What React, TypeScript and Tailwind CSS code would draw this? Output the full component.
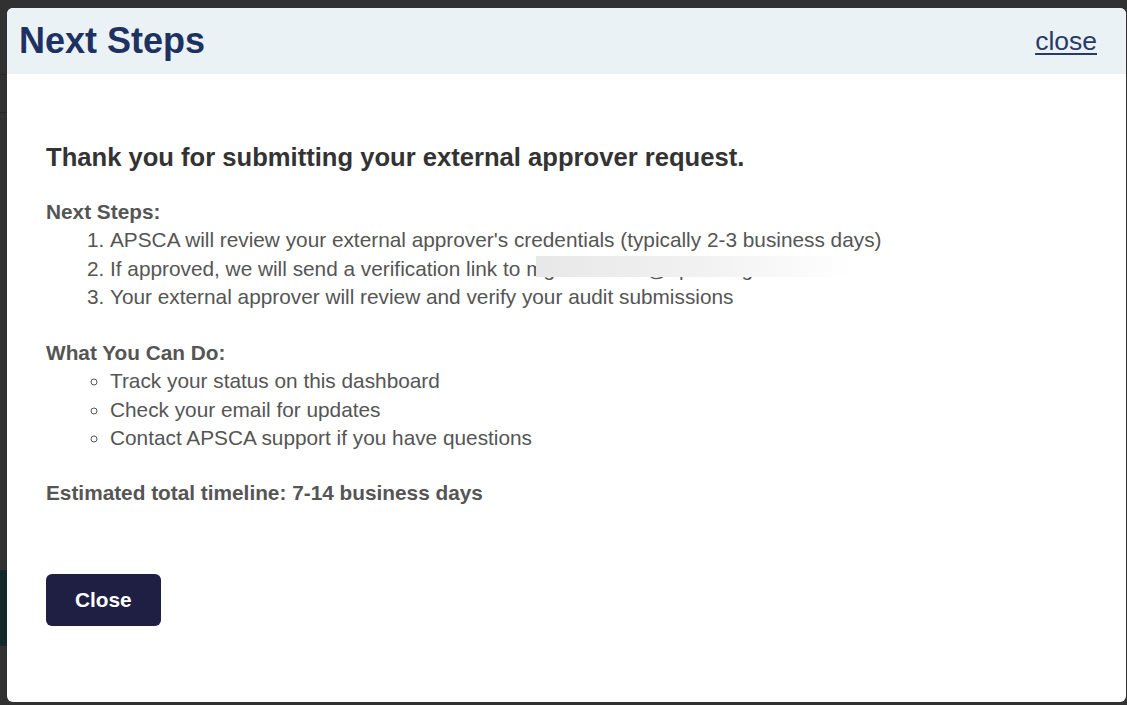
import React from "react";

const steps = [
  "APSCA will review your external approver's credentials (typically 2-3 business days)",
  "If approved, we will send a verification link to",
  "Your external approver will review and verify your audit submissions",
];

const todo = [
  "Track your status on this dashboard",
  "Check your email for updates",
  "Contact APSCA support if you have questions",
];

export default function App() {
  return (
    <div className="relative h-[705px] w-[1127px] overflow-hidden bg-[#313131] font-['Liberation_Sans',Arial,sans-serif]">
      {/* page underneath the overlay */}
      <div className="absolute left-0 top-[74px] h-px w-[7px] bg-[#262626]" />
      <div className="absolute left-0 top-[112px] h-px w-[7px] bg-[#262626]" />
      <div className="absolute left-0 top-[570px] h-[76px] w-[7px] bg-[#15292b]" />

      {/* Modal */}
      <div className="absolute left-[7px] top-[8px] flex h-[694px] w-[1119px] flex-col overflow-hidden rounded-[6px] bg-white">
        <div className="flex h-[66px] items-center justify-between bg-[#ebf2f5] pl-[12px] pr-[29px]">
          <h2 className="text-[36px] font-bold leading-[40px] text-[#1e3262]">Next Steps</h2>
          <a href="#" className="text-[26.5px] leading-[30px] text-[#283a68] underline underline-offset-[3px]">
            close
          </a>
        </div>

        <div className="flex flex-col pl-[39px] pt-[68px] text-[20.8px] leading-[28.5px] text-[#555]">
          <h3 className="text-[25.6px] font-bold leading-[30px] text-[#333]">
            Thank you for submitting your external approver request.
          </h3>

          <p className="mt-[25.5px] font-bold">Next Steps:</p>
          <ol className="list-decimal pl-[64px]">
            {steps.map((s, i) => (
              <li key={i}>
                {s}
                {i === 1 && (
                  <>
                    {" "}
                    <span className="relative">
                      mgreenwood@apscaorg.com
                      <span className="absolute left-[10px] top-[-1px] h-[21px] w-[318px] bg-gradient-to-r from-[#e8e8e8] via-[#f1f1f1] to-white" />
                    </span>
                  </>
                )}
              </li>
            ))}
          </ol>

          <p className="mt-[27px] font-bold">What You Can Do:</p>
          <ul className="list-[circle] pl-[64px]">
            {todo.map((t) => (
              <li key={t}>{t}</li>
            ))}
          </ul>

          <p className="mt-[26px] font-bold">Estimated total timeline: 7-14 business days</p>

          <div className="mt-[67px]">
            <button className="h-[52px] rounded-[6px] bg-[#1f1f44] px-[29px] text-[20.8px] font-bold text-white">
              Close
            </button>
          </div>
        </div>
      </div>
    </div>
  );
}
